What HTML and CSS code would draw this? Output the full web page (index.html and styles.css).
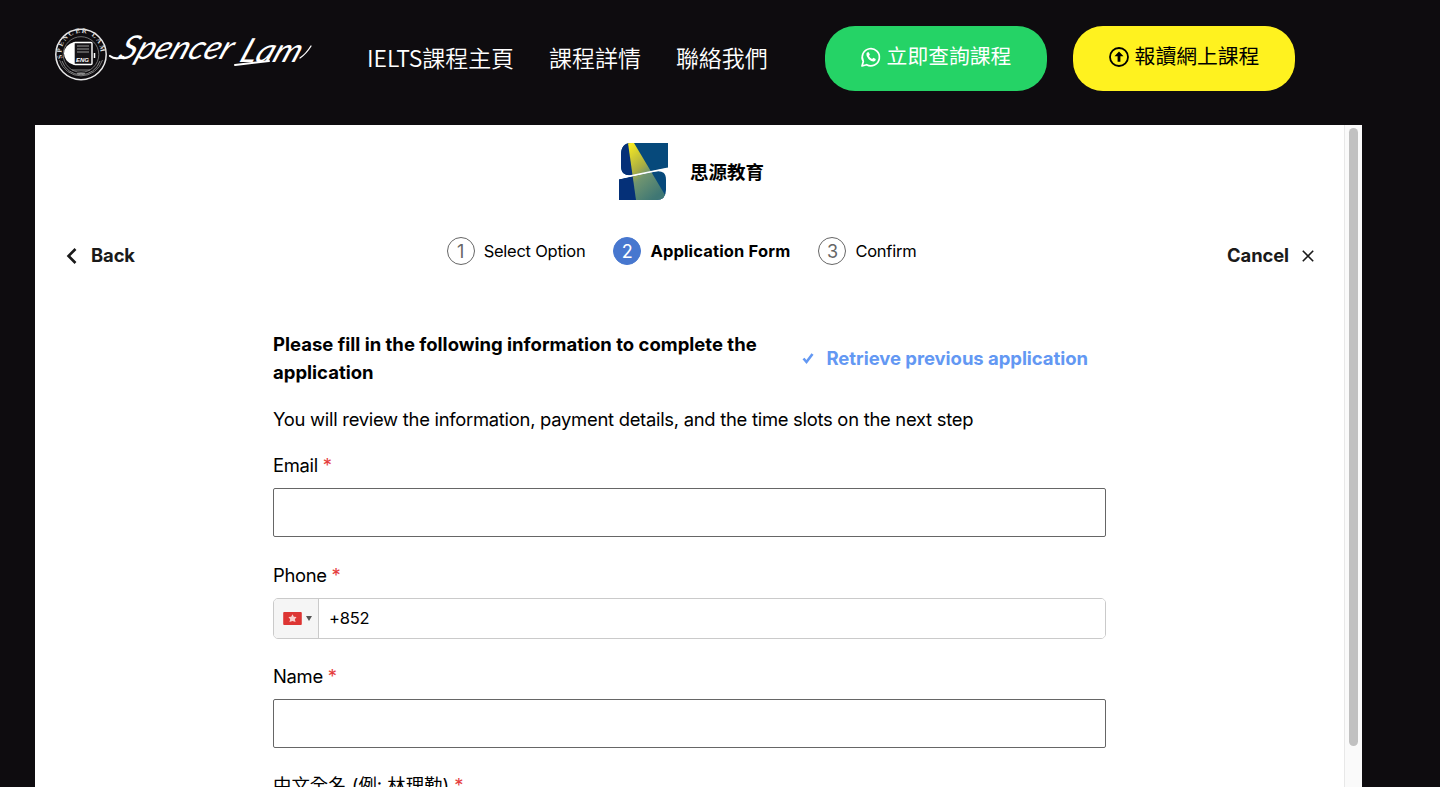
FILE: index.html
```html
<!DOCTYPE html>
<html lang="zh-HK">
<head>
    <meta charset="UTF-8">
    <meta name="viewport" content="width=device-width, initial-scale=1.0">
    <title>Spencer Lam - Application Form</title>
    <link rel="stylesheet" href="styles.css">
</head>
<body>
    <header class="site-header">
        <a class="brand" href="#">
            <svg width="270" height="56" viewBox="0 0 270 56">
                <defs>
                    <path id="badge-arc" d="M8.6 32 A19.3 19.3 0 1 1 45.4 32"/>
                </defs>
                <circle cx="27" cy="28.500" r="25.2" fill="none" stroke="#e8e8e8" stroke-width="1.5"/>
                <circle cx="27" cy="28.500" r="17.8" fill="none" stroke="#888" stroke-width=".8"/>
                <path d="M5.5 34 A22.5 22.5 0 0 0 48.5 34" fill="none" stroke="#777" stroke-width="1"/>
                <path d="M8 35 A20 20 0 0 0 46 35" fill="none" stroke="#888" stroke-width="1"/>
                <path d="M18 44h18M23 47.5h8" stroke="#888" stroke-width="1"/>
                <text class="badge-text"><textPath href="#badge-arc" textLength="66">SPENCER LAM</textPath></text>
                <path d="M20 16 A14 12 0 0 0 20 39Z" fill="#fff"/>
                <rect x="20" y="16.5" width="18" height="22" rx="1" fill="#151317" stroke="#fff" stroke-width="1.4"/>
                <path d="M23 20h12M23 23h12M23 26h12" stroke="#999" stroke-width="1.2"/>
                <path d="M40.5 27v5" stroke="#fff" stroke-width="1.5"/>
                <text class="badge-eng" x="22" y="35.5" textLength="13">ENG</text>
                <g fill="none" stroke="#fff" stroke-linecap="round">
                    <path d="M56 30q5 4 13 1" stroke-width="2.200"/>
                    <path d="M181 39l34-4" stroke-width="2"/>
                    <path d="M246 32q6-4 11-12" stroke-width="1.300"/>
                </g>
                <text class="brand-name" transform="translate(63 32.500) skewX(-22)" textLength="112" lengthAdjust="spacingAndGlyphs">Spencer</text>
                <text class="brand-name" transform="translate(184 36) skewX(-22)" textLength="60" lengthAdjust="spacingAndGlyphs">Lam</text>
            </svg>
        </a>
        <nav class="main-nav">
            <a href="#">IELTS課程主頁</a>
            <a href="#">課程詳情</a>
            <a href="#">聯絡我們</a>
        </nav>
        <div class="header-actions">
            <a class="btn btn-whatsapp" href="#">
                <svg width="20" height="20" viewBox="0 0 20 20">
                    <path d="M1 19l1.300-4.600A8.600 8.600 0 1 1 5.600 17.700Z" fill="none" stroke="currentColor" stroke-width="1.7" stroke-linejoin="round"/>
                    <path d="M6.700 5.300h1.100l1.100 2.500-1 1.300q1.100 2.200 3.200 2.900l1.200-1.200 2.500 1.200q0 2-1.900 2.500-2.300.3-5.200-2.300Q4.900 9.300 5.400 6.800q.4-1.200 1.300-1.500Z" fill="currentColor"/>
                </svg>
                <span>立即查詢課程</span>
            </a>
            <a class="btn btn-enroll" href="#">
                <svg width="20" height="20" viewBox="0 0 20 20">
                    <circle cx="10" cy="10" r="9" fill="none" stroke="currentColor" stroke-width="1.8"/>
                    <path d="M10 4.500l4.500 4.800h-3.100v5.500H8.600V9.300H5.500Z" fill="currentColor"/>
                </svg>
                <span>報讀網上課程</span>
            </a>
        </div>
    </header>

    <main class="panel">
        <div class="panel-content">
            <div class="school">
                <svg width="49" height="57" viewBox="0 0 49 57">
                    <defs>
                        <linearGradient id="beam" x1="0" y1="0" x2=".6" y2="1">
                            <stop offset="0" stop-color="#fff01e"/>
                            <stop offset=".45" stop-color="#a9ad43"/>
                            <stop offset=".6" stop-color="#6f9470"/>
                            <stop offset="1" stop-color="#3f7774"/>
                        </linearGradient>
                        <clipPath id="school-shape">
                            <path d="M12 0H49V25L14 32Q2 34 2 23V12Q2 0 12 0Z"/>
                            <path d="M0 36.500L36 28.500Q47 26.500 47 37V47Q47 57 37 57H0Z"/>
                        </clipPath>
                    </defs>
                    <g clip-path="url(#school-shape)">
                        <path d="M0 0H49V57H0Z" fill="#06497b"/>
                        <path d="M0 0H10L17 57H0Z" fill="#053078"/>
                        <path d="M9 0H15L49 57H17Z" fill="url(#beam)"/>
                    </g>
                    <path d="M0 35.300L49 25.300" stroke="#fff" stroke-width="1.500"/>
                </svg>
                <span>思源教育</span>
            </div>

            <div class="toolbar">
                <a class="back" href="#">
                    <svg width="12" height="18" viewBox="0 0 12 18"><path d="M10.500 2L3.500 9l7 7" fill="none" stroke="currentColor" stroke-width="2.600"/></svg>
                    <span>Back</span>
                </a>
                <ol class="steps">
                    <li><span class="num">1</span><span class="step-label">Select Option</span></li>
                    <li class="active"><span class="num">2</span><span class="step-label">Application Form</span></li>
                    <li><span class="num">3</span><span class="step-label">Confirm</span></li>
                </ol>
                <a class="cancel" href="#">
                    <span>Cancel</span>
                    <svg width="12" height="12" viewBox="0 0 12 12"><path d="M.8.8l10.400 10.400M11.200.8L.8 11.200" stroke="currentColor" stroke-width="1.600"/></svg>
                </a>
            </div>

            <form class="application">
                <div class="form-head">
                    <h2>Please fill in the following information to complete the application</h2>
                    <a class="retrieve" href="#">
                        <svg width="12" height="12" viewBox="0 0 12 12"><path d="M1.500 6.500l3 3.500L10.500 2" fill="none" stroke="currentColor" stroke-width="2.600"/></svg>
                        <span>Retrieve previous application</span>
                    </a>
                </div>
                <p class="hint">You will review the information, payment details, and the time slots on the next step</p>

                <label for="email">Email <span class="required">*</span></label>
                <input class="field" id="email" type="email">

                <label for="phone">Phone <span class="required">*</span></label>
                <div class="phone">
                    <div class="country">
                        <svg width="19" height="13" viewBox="0 0 20 14">
                            <rect width="20" height="14" rx="1" fill="#dd3533"/>
                            <path d="M10 2.500l1.400 2.700 3 .2-1.900 2.500.8 3-3.300-1.300-3.300 1.300.8-3-1.900-2.500 3-.2Z" fill="#f9cfcd"/>
                        </svg>
                        <i class="arrow"></i>
                    </div>
                    <input id="phone" type="tel" value="+852">
                </div>

                <label for="name">Name <span class="required">*</span></label>
                <input class="field" id="name" type="text">

                <label class="label-zh" for="chinese-name">中文全名 (例: 林理勤) <span class="required">*</span></label>
                <input class="field" id="chinese-name" type="text">
            </form>
        </div>
        <div class="scrollbar"><div class="thumb"></div></div>
    </main>
</body>
</html>
```
FILE: styles.css
```css
* {
    box-sizing: border-box;
}
body {
    margin: 0;
    height: 787px;
    overflow: hidden;
    background: #0e0c0f;
    color: #000;
    font-family: Inter, "Noto Sans CJK TC", sans-serif;
    font-size: 18.4px;
}
a {
    color: inherit;
    text-decoration: none;
}
svg {
    flex: none;
    display: block;
    overflow: visible;
}

/* Header */
.site-header {
    display: flex;
    height: 125px;
    padding: 26px 0 0 54px;
    color: #fff;
    font-family: "Noto Sans CJK TC", sans-serif;
}
.brand {
    width: 313px;
}
.brand-name {
    font: italic 400 33px Lato, sans-serif;
    fill: #fff;
}
.badge-text {
    font: bold 7px "Liberation Serif", serif;
    fill: #ddd;
}
.badge-eng {
    font: italic bold 6px "Liberation Sans", sans-serif;
    fill: #fff;
}
.main-nav {
    display: flex;
    gap: 35px;
    width: 458px;
    height: 62px;
    align-items: center;
    font-size: 23px;
    font-weight: 350;
    letter-spacing: -.05px;
    white-space: nowrap;
}
.header-actions {
    display: flex;
    gap: 26px;
}
.btn {
    display: flex;
    align-items: center;
    justify-content: center;
    gap: 6px;
    width: 222px;
    height: 65px;
    padding-bottom: 4px;
    border-radius: 30px;
    font-size: 20.8px;
    white-space: nowrap;
}
.btn span {
    margin-top: -4px;
}
.btn-whatsapp {
    background: #25d366;
}
.btn-enroll {
    background: #fff21f;
    color: #000;
}

/* Panel */
.panel {
    display: flex;
    width: 1327px;
    height: 662px;
    margin-left: 35px;
    background: #fff;
    overflow: hidden;
}
.panel-content {
    width: 1309px;
    padding-top: 18px;
}
.school {
    display: flex;
    justify-content: center;
    align-items: center;
    gap: 22px;
    padding-left: 4px;
    font-size: 18.5px;
    font-weight: 700;
}
.school span {
    margin-top: -2px;
}
.toolbar {
    display: flex;
    justify-content: space-between;
    align-items: center;
    height: 40px;
    margin-top: 36px;
    padding: 0 30px;
    color: #1a1a1a;
}
.back,
.cancel {
    display: flex;
    align-items: center;
    width: 360px;
    font-weight: 700;
}
.back {
    gap: 14px;
}
.cancel {
    justify-content: flex-end;
    gap: 13px;
}
.back span,
.cancel span {
    margin-top: -2px;
    letter-spacing: -.1px;
}
.steps {
    display: flex;
    gap: 28px;
    margin: 0 16px 10px 0;
    padding: 0;
    list-style: none;
    color: #000;
    font-size: 16.5px;
    letter-spacing: -.25px;
    white-space: nowrap;
}
.steps li {
    display: flex;
    align-items: center;
    gap: 9px;
}
.num {
    display: flex;
    align-items: center;
    justify-content: center;
    width: 28px;
    height: 28px;
    border: 1px solid #666;
    border-radius: 50%;
    color: #666;
    font-size: 18px;
}
.active {
    font-weight: 700;
    letter-spacing: .15px;
}
.active .num {
    border-color: #4777cf;
    background: #4777cf;
    color: #fff;
    font-weight: 400;
}

/* Form */
.application {
    width: 833px;
    margin: 54px 0 0 238px;
}
.form-head {
    display: flex;
    align-items: center;
    justify-content: space-between;
    padding-right: 18px;
}
h2 {
    width: 500px;
    margin: 0;
    font-size: 18.5px;
    font-weight: 700;
    line-height: 28px;
}
.retrieve {
    display: flex;
    align-items: center;
    gap: 13px;
    color: #6398f3;
    font-size: 18.5px;
    font-weight: 700;
    letter-spacing: -.05px;
    white-space: nowrap;
}
.hint {
    margin: 19px 0 18px;
    line-height: 28px;
    letter-spacing: -.27px;
    white-space: nowrap;
}
label {
    display: block;
    height: 28px;
    line-height: 28px;
    margin-bottom: 9px;
    letter-spacing: -.3px;
}
.label-zh {
    margin-top: -1px;
    letter-spacing: 0;
}
.required {
    color: #e53e3e;
}
.field {
    display: block;
    width: 100%;
    height: 49px;
    margin: 0 0 24px;
    border: 1px solid #666;
    border-radius: 2px;
    background: #fff;
}
.phone {
    display: flex;
    height: 41px;
    margin-bottom: 23px;
    border: 1px solid #cacaca;
    border-radius: 5px;
    overflow: hidden;
}
.phone input {
    flex: 1;
    border: 0;
    padding: 0 10px 2px;
    font: 16.5px Inter, sans-serif;
    letter-spacing: -.2px;
}
.country {
    display: flex;
    align-items: center;
    justify-content: center;
    gap: 4px;
    width: 45px;
    padding-left: 2px;
    border-right: 1px solid #cacaca;
    background: #f5f5f5;
}
.arrow {
    border: 3.5px solid transparent;
    border-top: 5px solid #555;
    border-bottom: 0;
}

/* Scrollbar */
.scrollbar {
    width: 18px;
    padding: 3px 4px;
    border-left: 1px solid #e8e8e8;
    background: #fafafa;
}
.thumb {
    width: 9px;
    height: 618px;
    border-radius: 5px;
    background: #c1c1c1;
}
```
